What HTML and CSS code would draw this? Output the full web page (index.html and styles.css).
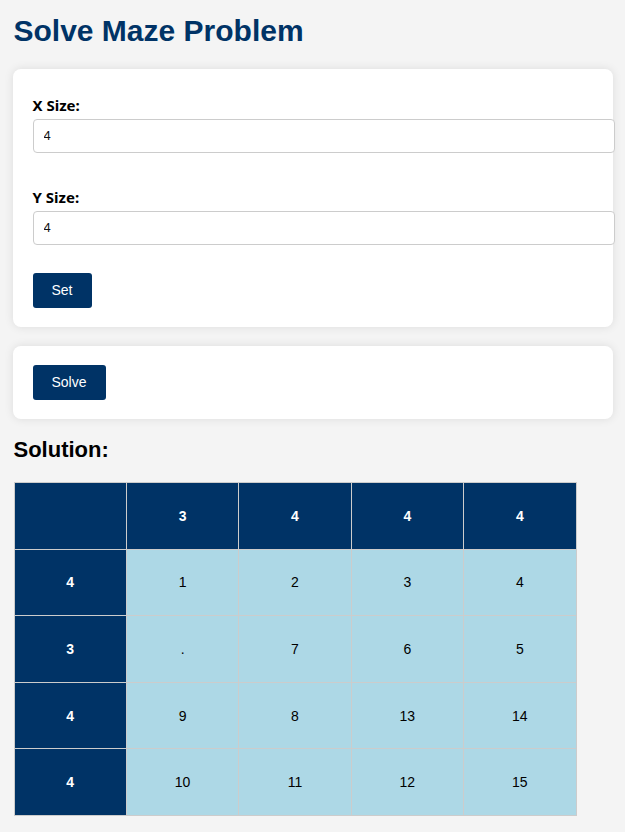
FILE: index.html
```html
<!DOCTYPE html>
<html>
<head>
<meta charset="utf-8">
<title>Solve Maze Problem</title>
<link rel="stylesheet" href="styles.css">
</head>
<body>
<div class="container">
  <h1 class="title">Solve Maze Problem</h1>
  <div class="card">
    <label class="field-label" for="xsize">X Size:</label>
    <input class="field-input" id="xsize" type="number" value="4">
    <label class="field-label" for="ysize">Y Size:</label>
    <input class="field-input" id="ysize" type="number" value="4">
    <button class="btn btn-set">Set</button>
  </div>
  <div class="card">
    <button class="btn">Solve</button>
  </div>
  <h2 class="subtitle">Solution:</h2>
  <table class="maze">
    <tr><th></th><th>3</th><th>4</th><th>4</th><th>4</th></tr>
    <tr><th>4</th><td>1</td><td>2</td><td>3</td><td>4</td></tr>
    <tr><th>3</th><td>.</td><td>7</td><td>6</td><td>5</td></tr>
    <tr><th>4</th><td>9</td><td>8</td><td>13</td><td>14</td></tr>
    <tr><th>4</th><td>10</td><td>11</td><td>12</td><td>15</td></tr>
  </table>
</div>
</body>
</html>
```
FILE: styles.css
```css
html, body {
  margin: 0;
  padding: 0;
  background: #f4f4f4;
  font-family: "Liberation Sans", Arial, sans-serif;
}

.container {
  max-width: 600px;
  margin: 0 auto;
  padding-top: 14px;
}

.title {
  margin: 0 0 21px 1px;
  font-size: 30px;
  font-weight: bold;
  color: #003366;
}

.card {
  display: flex;
  flex-direction: column;
  align-items: flex-start;
  background: #fff;
  border-radius: 8px;
  box-shadow: 0 0 10px rgba(0, 0, 0, 0.1);
  padding: 19px 20px;
  margin-bottom: 19px;
}

.field-label {
  display: block;
  margin: 7px 0 4px;
  font-family: "Noto Sans", "Open Sans", sans-serif;
  font-size: 15px;
  line-height: 20px;
  font-weight: bold;
  color: #000;
}

.field-input {
  display: block;
  align-self: stretch;
  width: auto;
  margin: 0 -22px 27px 0;
  padding: 8px 10px;
  border: 1px solid #ccc;
  border-radius: 4px;
  font-family: "Liberation Sans", Arial, sans-serif;
  font-size: 13px;
  line-height: 16px;
  color: #111;
  background: #fff;
  -moz-appearance: textfield;
}

.field-input::-webkit-inner-spin-button,
.field-input::-webkit-outer-spin-button {
  -webkit-appearance: none;
  margin: 0;
}

.btn {
  display: inline-block;
  background: #003366;
  color: #fff;
  border: none;
  border-radius: 3px;
  padding: 10px 19px;
  font-family: "Liberation Sans", Arial, sans-serif;
  font-size: 14px;
  line-height: 15px;
  cursor: pointer;
}

.btn-set {
  margin-top: 1px;
}

.subtitle {
  margin: 0 0 20px 1px;
  font-size: 22px;
  line-height: 24px;
  font-weight: bold;
  color: #000;
}

.maze {
  border-collapse: collapse;
  margin-left: 1px;
  table-layout: fixed;
  width: 563px;
}

.maze th,
.maze td {
  border: 1px solid #ccc;
  height: 65.6px;
  padding: 0;
  text-align: center;
  font-size: 14px;
}

.maze th {
  background: #003366;
  color: #fff;
  font-weight: bold;
}

.maze td {
  background: #add8e6;
  color: #000;
}
```
